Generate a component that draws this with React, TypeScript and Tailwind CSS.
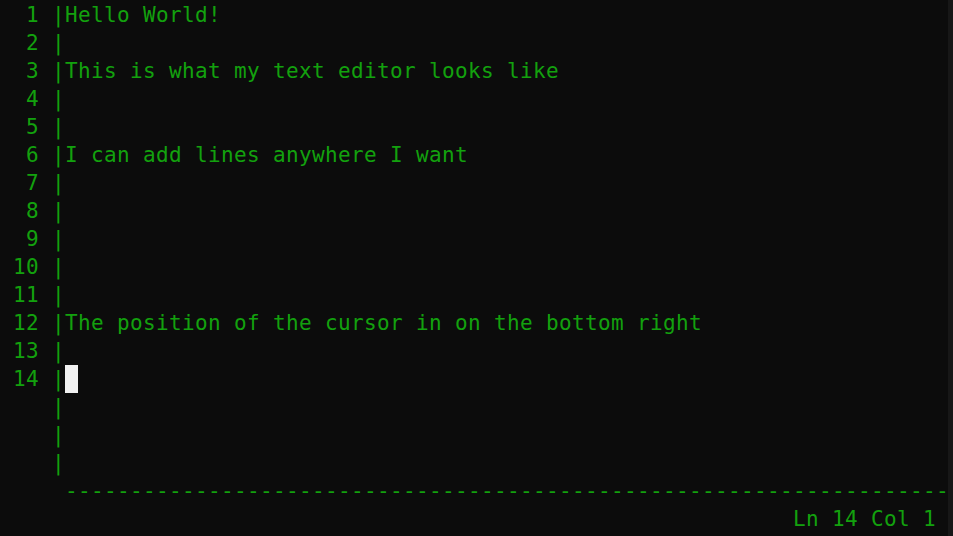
import React from "react";

const lines: string[] = [
  "Hello World!",
  "",
  "This is what my text editor looks like",
  "",
  "",
  "I can add lines anywhere I want",
  "",
  "",
  "",
  "",
  "",
  "The position of the cursor in on the bottom right",
  "",
  "",
];

function pad(n: number): string {
  const s = String(n);
  return " ".repeat(3 - s.length) + s;
}

export default function App() {
  return (
    <div className="flex h-[536px] w-[953px] overflow-hidden bg-[#0c0c0c]">
      <div className="flex flex-1 flex-col overflow-hidden pt-px font-['DejaVu_Sans_Mono',monospace] text-[21px] leading-[28px] tracking-[0.356px] text-[#13a10e]">
        {lines.map((text, i) => (
          <div key={i} className="h-[28px] whitespace-pre">
            {pad(i + 1) + " |" + text}
            {i === 13 && (
              <span className="inline-block h-[28px] w-[13px] bg-[#f2f2f2] align-top" />
            )}
          </div>
        ))}
        {[0, 1, 2].map((k) => (
          <div key={"e" + k} className="h-[28px] whitespace-pre">
            {"    |"}
          </div>
        ))}
        <div className="h-[28px] whitespace-pre">{"     " + "-".repeat(68)}</div>
        <div className="h-[28px] whitespace-pre">{" ".repeat(61) + "Ln 14 Col 1"}</div>
      </div>
      <div className="w-[5px] bg-[#171717]" />
    </div>
  );
}
